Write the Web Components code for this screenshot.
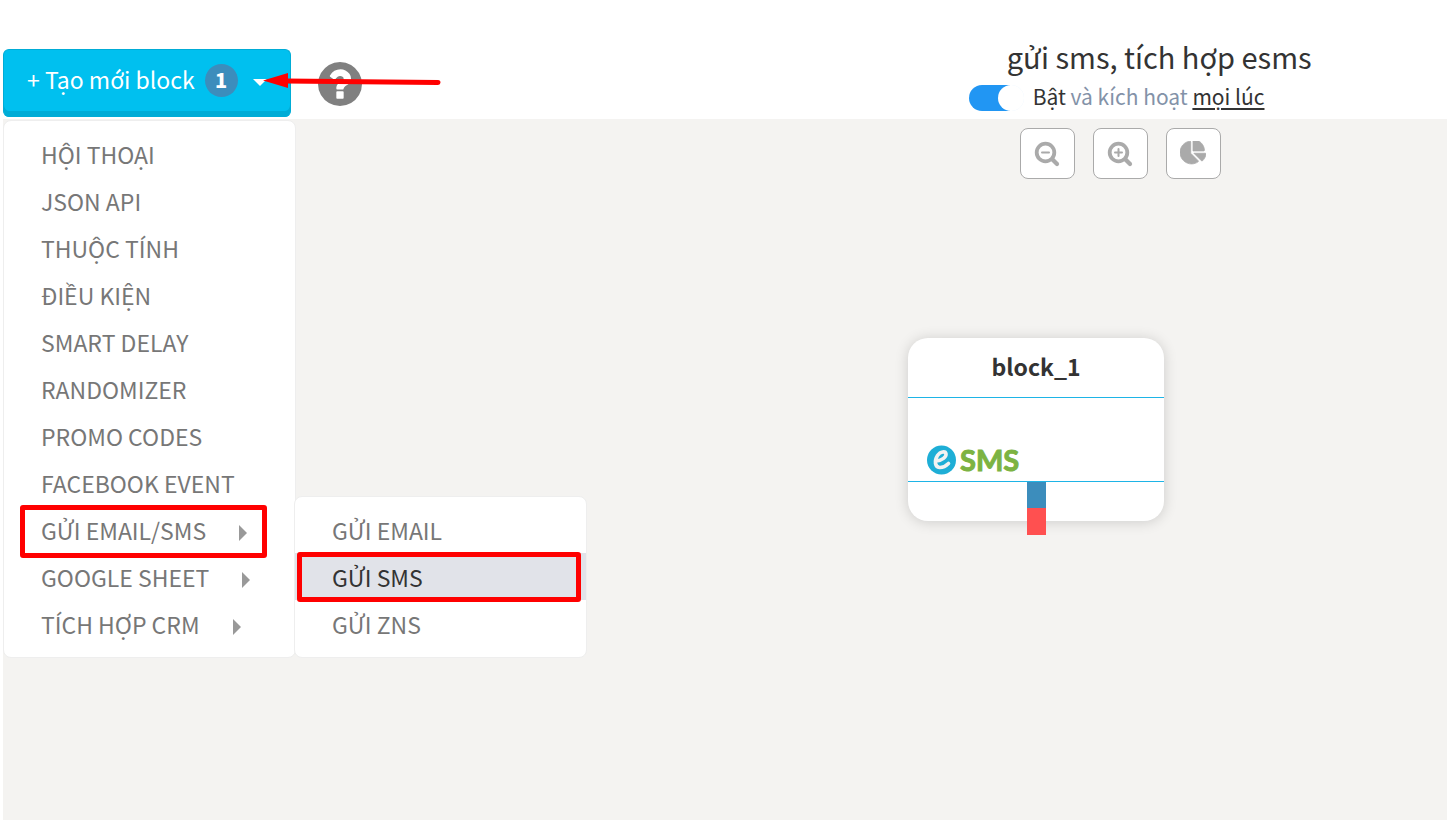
<!DOCTYPE html>
<html lang="vi">
<head>
<meta charset="utf-8">
<meta name="viewport" content="width=device-width, initial-scale=1">
<title>gửi sms, tích hợp esms</title>
<style>
  body { margin: 0; background: #fff; color: #333; font-family: "Noto Sans CJK JP", "Noto Sans", sans-serif; }
</style>
</head>
<body>
<flow-editor></flow-editor>
<script>
const define = (name, html, setup) => {
  const template = document.createElement('template');
  template.innerHTML = '<style>*{box-sizing:border-box}:host{display:block}button{font:inherit;color:inherit;cursor:pointer}</style>' + html;
  customElements.define(name, class extends HTMLElement {
    constructor() {
      super();
      this.attachShadow({ mode: 'open' }).append(template.content.cloneNode(true));
    }
    connectedCallback() { if (setup) setup(this, this.shadowRoot); }
  });
};

/* Red frame drawn over a row to call it out */
define('mark-frame', `
<style>
  :host { position: absolute; border: 5px solid #f00; border-radius: 3px; pointer-events: none; z-index: 3; }
</style>`);

/* Red pointer that leads to the caret of the create button */
define('mark-arrow', `
<style>
  :host { position: absolute; pointer-events: none; z-index: 3; }
  svg { display: block; }
</style>
<svg width="180" height="20" viewBox="0 0 180 20" aria-hidden="true">
  <path d="M22 10 L175 11.500" stroke="#f00" stroke-width="5" stroke-linecap="round"/>
  <path d="M0 9.500 L25 2 V17 Z" fill="#f00"/>
</svg>`);

define('create-button', `
<style>
  button { display: flex; align-items: center; width: 288px; height: 68px; padding: 0 23px 6px; border: 1px solid #00acd6; border-bottom: 0;
    border-radius: 6px; background: #00c0ef; box-shadow: inset 0 -6px #00acd6; color: #fff; font-size: 23px; line-height: 32px; }
  .label { padding-bottom: 4px; }
  .badge { width: 33px; height: 33px; margin-left: 10px; border-radius: 50%; background: #3c8dbc; font-size: 20px; font-weight: 900; line-height: 32px; }
  .caret { margin: 3px 0 0 15px; border: 7px solid transparent; border-top-color: #fff; border-bottom: 0; }
</style>
<button type="button" aria-haspopup="true" aria-expanded="true"><span class="label"><slot></slot></span><span class="badge">1</span><span class="caret"></span></button>`);

define('help-button', `
<style>
  button { display: block; padding: 2px 0 0; border: 0; background: none; }
  svg { display: block; fill: #808080; }
</style>
<button type="button" aria-label="Trợ giúp">
<svg width="44" height="44" viewBox="0 128 1536 1536"><path d="M896 1376v-192q0-14-9-23t-23-9h-192q-14 0-23 9t-9 23v192q0 14 9 23t23 9h192q14 0 23-9t9-23zm256-672q0-88-55.500-163t-138.500-116-170-41q-243 0-371 213-15 24 8 42l132 100q7 6 19 6 16 0 25-12 53-68 86-92 34-24 86-24 48 0 85.500 26t37.500 59q0 38-20 61t-68 45q-63 28-115.500 86.500t-52.500 125.500v36q0 14 9 23t23 9h192q14 0 23-9t9-23q0-19 21.500-49.500t54.500-49.500q32-18 49-28.500t46-35 44.500-48 28-60.500 12.500-81zm384 192q0 209-103 385.500t-279.500 279.500-385.500 103-385.500-103-279.500-279.500-103-385.500 103-385.500 279.500-279.500 385.500-103 385.500 103 279.500 279.500 103 385.500z"/></svg>
</button>`);

define('menu-item', `
<style>
  :host { position: relative; color: #777; }
  button { display: flex; align-items: center; width: 100%; height: 47px; padding: 0 37px; border: 0; background: none;
    font-size: 23px; line-height: 32px; text-align: left; white-space: nowrap; }
  :host([active]) button { background: #e1e3e9; color: #333; }
  .arrow { display: none; margin: 6px 0 0 33px; border: 8px solid transparent; border-left-color: #999; border-right: 0; }
  :host([parent]) .arrow { display: block; }
</style>
<button type="button" role="menuitem"><slot></slot><span class="arrow"></span></button>
<slot name="over"></slot>`);

define('menu-panel', `
<style>
  :host { position: absolute; z-index: 2; width: 293px; padding: 9px 0 10px; border: 1px solid #eee; border-radius: 8px; background: #fff; }
</style>
<slot></slot>`);

define('toggle-switch', `
<style>
  :host { display: flex; }
  input { appearance: none; width: 55px; height: 26px; margin: 0; border-radius: 13px; cursor: pointer; display: flex; align-items: center; background: #ccc; }
  input::before { content: ""; width: 26px; height: 26px; border-radius: 50%; background: #fff; }
  input:checked { background: linear-gradient(90deg, #2196f3 75%, #e3f1fd 75%); justify-content: flex-end; }
</style>
<input type="checkbox" checked aria-label="Bật">`);

define('flow-status', `
<style>
  h1 { margin: 0 0 6px; padding-left: 38px; font-size: 29px; font-weight: 400; line-height: 40px; }
  .row { display: flex; align-items: flex-end; gap: 9px; font-size: 21px; line-height: 28px; white-space: nowrap; color: #8392a8; }
  .row span { padding-bottom: 1px; }
  b { font-weight: 400; color: #333; }
  a { color: #333; text-decoration: underline; text-decoration-thickness: 2px; text-underline-offset: 3px; }
</style>
<h1>gửi sms, tích hợp esms</h1>
<div class="row"><toggle-switch></toggle-switch><span><b>Bật</b> và kích hoạt <a href="#always">mọi lúc</a></span></div>`);

define('tool-button', `
<style>
  button { display: flex; align-items: center; justify-content: center; width: 55px; height: 51px; padding: 0; border: 1px solid #aaa; border-radius: 8px; background: #fff; }
</style>
<button type="button"><slot></slot></button>`, (host, root) => {
  root.querySelector('button').setAttribute('aria-label', host.getAttribute('label'));
});

define('esms-logo', `
<style>
  :host { display: flex; align-items: center; gap: 3px; height: 30px; }
  svg { display: block; }
  span { color: #7cb342; font: 700 29px/30px Lato, sans-serif; -webkit-text-stroke: 1px #7cb342; }
</style>
<svg width="30" height="30" viewBox="0 0 30 30" aria-hidden="true"><circle cx="14.500" cy="15" r="14.500" fill="#1eaed6"/>
<path d="M9.500 16 C15 15.500 19.500 12 19 8.800 C18.500 6 13.500 6 10.500 10.500 C7 16 8 22 12.500 22.500 C16 22.700 19 21 21.500 18.500" fill="none" stroke="#f2f2f2" stroke-width="3.600" stroke-linecap="round"/></svg>
<span>SMS</span>`);

define('flow-node', `
<style>
  :host { position: absolute; width: 256px; border-radius: 20px; background: #fff; box-shadow: 0 1px 14px rgba(0,0,0,.16); }
  h2 { margin: 0; height: 60px; border-bottom: 1px solid #1eb4e6; font-size: 23px; font-weight: 700; line-height: 56px; text-align: center; }
  .body { display: flex; align-items: flex-end; height: 84px; padding: 0 19px 6px; border-bottom: 1px solid #1eb4e6; }
  .foot { display: flex; flex-direction: column; align-items: center; height: 39px; }
  i { flex: none; width: 19px; height: 26px; background: #3c8dbc; }
  i + i { height: 27px; background: #ff5050; }
</style>
<h2><slot></slot></h2>
<div class="body"><esms-logo></esms-logo></div>
<div class="foot"><i></i><i></i></div>`);

define('flow-editor', `
<style>
  :host { display: flex; flex-direction: column; min-height: 100vh; padding-left: 3px; }
  header { display: grid; grid-template-columns: 2fr 1fr; height: 119px; align-items: end; }
  .left { position: relative; display: flex; align-items: center; gap: 27px; padding-bottom: 2px; }
  flow-status { padding: 0 0 8px 3px; }
  main { position: relative; flex: 1; background: #f4f3f1; }
  .tools { display: grid; grid-template-columns: 2fr 1fr; padding-top: 9px; }
  .tools div { grid-column: 2; display: flex; gap: 18px; padding-left: 54px; }
  svg { display: block; fill: #aaa; }
  svg g { fill: none; stroke: #aaa; stroke-linecap: round; }
  .menu { left: 0; top: 1px; }
  .submenu { left: 290px; top: -10px; }
  mark-arrow { left: 260px; top: 22px; }
  .m1 { left: 16px; top: -1px; width: 247px; height: 53px; }
  .m2 { left: 2px; top: -1px; width: 284px; height: 50px; }
  flow-node { left: 905px; top: 219px; }
</style>
<header>
  <div class="left">
    <create-button>+ Tạo mới block</create-button>
    <help-button></help-button>
    <mark-arrow></mark-arrow>
  </div>
  <flow-status></flow-status>
</header>
<main>
  <div class="tools"><div>
    <tool-button label="Thu nhỏ"><svg width="26" height="26" viewBox="0 0 26 26"><g><circle cx="11.500" cy="11.500" r="8.800" stroke-width="3.800"/><path d="M18.500 18.500l4.500 4.500" stroke-width="4.200"/><path d="M8 11.500h7" stroke-width="2"/></g></svg></tool-button>
    <tool-button label="Phóng to"><svg width="26" height="26" viewBox="0 0 26 26"><g><circle cx="11.500" cy="11.500" r="8.800" stroke-width="3.800"/><path d="M18.500 18.500l4.500 4.500" stroke-width="4.200"/><path d="M8 11.500h7M11.500 8v7" stroke-width="2"/></g></svg></tool-button>
    <tool-button label="Thống kê"><svg width="26" height="26" viewBox="0 32 544 544"><path d="M527.790 288H290.500l158.030 158.030c6.040 6.040 15.980 6.530 22.190.68 38.700-36.460 65.320-85.610 73.130-140.860 1.340-9.460-6.510-17.850-16.060-17.850zm-15.830-64.800C503.720 103.740 408.260 8.280 288.800.04 279.680-.59 272 7.100 272 16.240V240h223.770c9.140 0 16.820-7.680 16.190-16.800zM224 288V50.710c0-9.550-8.390-17.400-17.840-16.060C86.990 51.490-4.100 155.600.14 280.370 4.500 408.510 114.830 513.590 243.030 511.980c50.400-.63 96.970-16.870 135.260-44.030 7.900-5.600 8.420-17.230 1.570-24.080L224 288z" stroke="#aaa" stroke-width="16"/></svg></tool-button>
  </div></div>
  <menu-panel class="menu" role="menu">
    <menu-item>HỘI THOẠI</menu-item>
    <menu-item>JSON API</menu-item>
    <menu-item>THUỘC TÍNH</menu-item>
    <menu-item>ĐIỀU KIỆN</menu-item>
    <menu-item>SMART DELAY</menu-item>
    <menu-item>RANDOMIZER</menu-item>
    <menu-item>PROMO CODES</menu-item>
    <menu-item>FACEBOOK EVENT</menu-item>
    <menu-item parent>GỬI EMAIL/SMS
      <mark-frame slot="over" class="m1"></mark-frame>
      <menu-panel slot="over" class="submenu" role="menu">
        <menu-item>GỬI EMAIL</menu-item>
        <menu-item active>GỬI SMS<mark-frame slot="over" class="m2"></mark-frame></menu-item>
        <menu-item>GỬI ZNS</menu-item>
      </menu-panel>
    </menu-item>
    <menu-item parent>GOOGLE SHEET</menu-item>
    <menu-item parent>TÍCH HỢP CRM</menu-item>
  </menu-panel>
  <flow-node>block_1</flow-node>
</main>`);
</script>
</body>
</html>
